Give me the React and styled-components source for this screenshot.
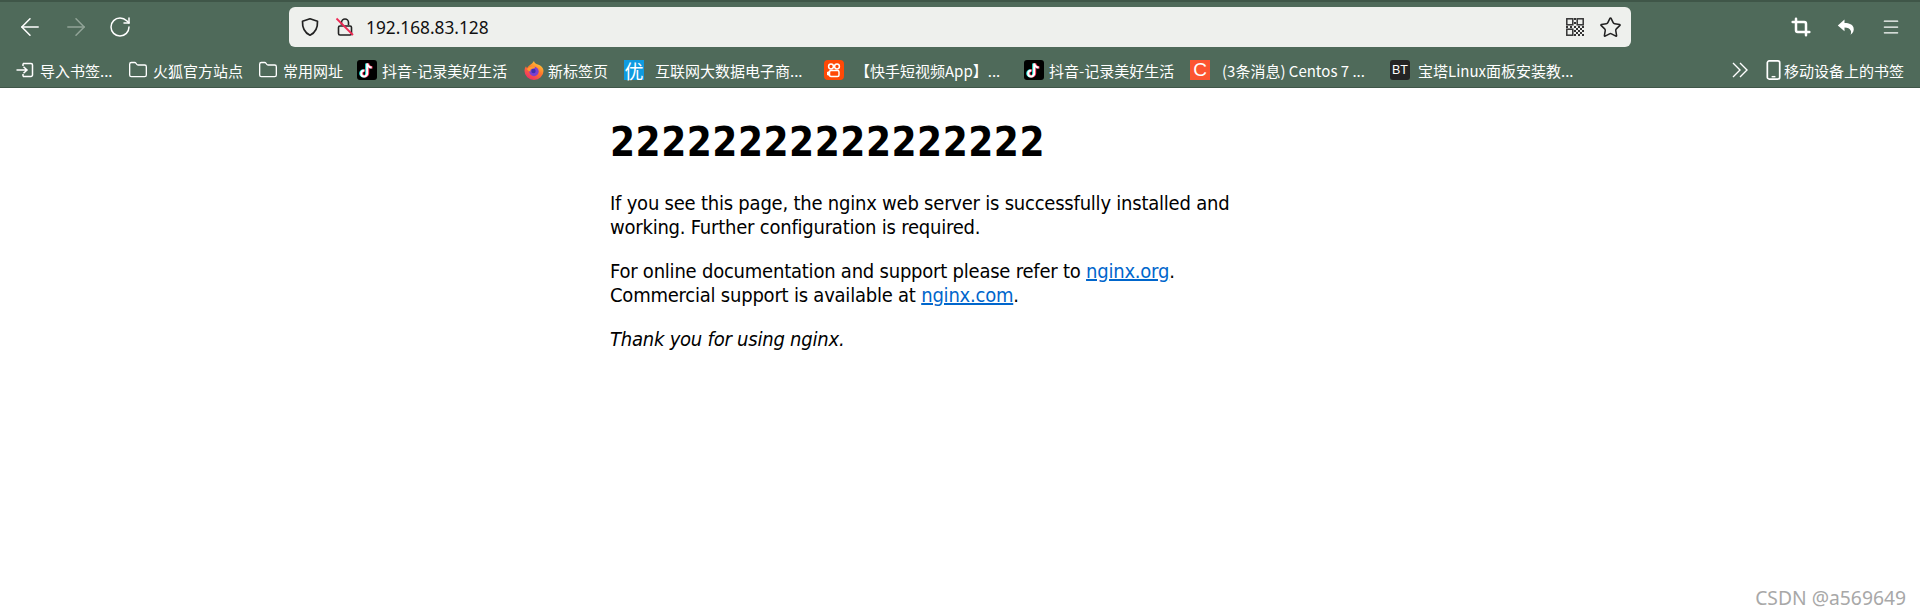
import styled, { createGlobalStyle } from 'styled-components';
import { ArrowLeft, ArrowRight, RotateCw, Star, Crop, Menu, Folder } from 'lucide-react';

const GlobalStyle = createGlobalStyle`
	html, body {
		margin: 0;
		padding: 0;
		background: #fff;
		height: 100%;
	}
	#root {
		height: 100%;
	}
`;

const Page = styled.div`
	position: relative;
	height: 615px;
	overflow: hidden;
	background: #fff;
`;

const Chrome = styled.header`
	background: #4f6a5a;
	border-top: 2px solid #3f5648;
	border-bottom: 1px solid #3f5648;
	height: 85px;
	font-family: "Noto Sans CJK SC", "Liberation Sans", sans-serif;
`;

const Toolbar = styled.div`
	display: flex;
	align-items: center;
	height: 40px;
	padding-top: 5px;
`;

const NavButtons = styled.div`
	display: flex;
	align-items: center;
	gap: 18px;
	width: 289px;
	padding-left: 16px;
	box-sizing: border-box;
`;

const AddressBar = styled.div`
	display: flex;
	align-items: center;
	width: 1342px;
	height: 40px;
	padding: 0 9px 0 11px;
	box-sizing: border-box;
	background: #eef0ed;
	border-radius: 6px;
	gap: 15px;
`;

const Url = styled.span`
	font-family: "Noto Sans", "Liberation Sans", sans-serif;
	font-size: 17.3px;
	color: #111;
	margin-left: -4px;
	flex: 1;
`;

const AddressActions = styled.div`
	display: flex;
	align-items: center;
	gap: 15px;
`;

const ToolSvg = styled.svg`
	width: ${(p) => p.$size}px;
	height: ${(p) => p.$size}px;
	flex: none;
	display: block;
`;

const TileSvg = styled.svg`
	width: 20px;
	height: 20px;
	flex: none;
	display: block;
`;

const ToolActions = styled.div`
	display: flex;
	align-items: center;
	gap: 26px;
	margin-left: 160px;
`;

const BookmarkBar = styled.div`
	display: flex;
	align-items: center;
	height: 32px;
	margin-top: 7px;
	padding: 0 15px 0 16px;
`;

const Bookmark = styled.div`
	display: flex;
	align-items: center;
	gap: ${(p) => p.$gap}px;
	width: ${(p) => p.$width}px;
	flex: none;
	font-size: 15px;
	color: #fff;
	white-space: nowrap;
`;

const LetterTile = styled.span`
	display: flex;
	align-items: center;
	justify-content: center;
	width: 20px;
	height: 20px;
	flex: none;
	background: ${(p) => p.$bg};
	border-radius: ${(p) => p.$radius}px;
	font-family: "Liberation Sans", "Noto Sans CJK SC", sans-serif;
	font-size: ${(p) => p.$size}px;
	color: #fff;
`;

const Overflow = styled.div`
	display: flex;
	margin-left: auto;
	margin-right: 16px;
`;

const Content = styled.main`
	width: 700px;
	margin: 0 auto;
	font-family: "DejaVu Sans", sans-serif;
	font-stretch: condensed;
	color: #000;
`;

const Heading = styled.h1`
	margin: 31px 0 26px;
	font-size: 40px;
	line-height: 46px;
	font-weight: 700;
	letter-spacing: 0.55px;
`;

const Para = styled.p`
	margin: 0 0 20px;
	font-size: 20px;
	line-height: 24px;
	letter-spacing: -0.22px;
`;

const Link = styled.a`
	color: #0066cc;
`;

const Watermark = styled.div`
	position: absolute;
	right: 14px;
	bottom: 4px;
	font-family: "Noto Sans", sans-serif;
	font-size: 19.3px;
	color: #a8a8a8;
`;

const TikTokIcon = () => (
	<TileSvg viewBox="0 0 20 20">
		<rect width="20" height="20" rx="3" fill="#000" />
		<path d="M10.2 3v10a3 3 0 1 1-3-3M10.2 3c.3 2.5 2 4 4.5 4.2" fill="none" stroke="#25f4ee" strokeWidth="2.4" transform="translate(-.8 .4)" />
		<path d="M10.2 3v10a3 3 0 1 1-3-3M10.2 3c.3 2.5 2 4 4.5 4.2" fill="none" stroke="#fe2c55" strokeWidth="2.4" transform="translate(.8 .4)" />
		<path d="M10.2 3v10a3 3 0 1 1-3-3M10.2 3c.3 2.5 2 4 4.5 4.2" fill="none" stroke="#fff" strokeWidth="2" transform="translate(0 .4)" />
	</TileSvg>
);

const FirefoxIcon = () => (
	<TileSvg viewBox="0 0 20 20">
		<defs>
			<linearGradient id="fx" x1="0.8" y1="0" x2="0.2" y2="1">
				<stop offset="0" stopColor="#ffd83a" />
				<stop offset="0.45" stopColor="#ff7a2a" />
				<stop offset="1" stopColor="#f0246e" />
			</linearGradient>
		</defs>
		<path d="M10 1c.2 1.8 1.6 2.5 3 3.3C15.5 4.7 19.5 7 19.5 11A9.5 9 0 0 1 .5 11c0-2 .6-3.6 1.5-4.8.2 1 .6 1.5 1.2 1.9C4 5.5 7.5 5 10 1z" fill="url(#fx)" />
		<circle cx="10" cy="11.5" r="4.7" fill="#7b3fd0" />
		<circle cx="9.5" cy="11" r="2.2" fill="#3d2fb0" />
		<path d="M3 9c2-2 5-3 7-2.5 2 .5 1 1.8-1 2-2 .3-3 1.5-2.5 3-1.5-.2-3-1-3.5-2.5z" fill="#ff9a2e" />
	</TileSvg>
);

const KuaishouIcon = () => (
	<TileSvg viewBox="0 0 20 20">
		<rect width="20" height="20" rx="4" fill="#ff4906" />
		<circle cx="7" cy="6.5" r="2.4" fill="none" stroke="#fff" strokeWidth="1.5" />
		<circle cx="13" cy="6.5" r="2.4" fill="none" stroke="#fff" strokeWidth="1.5" />
		<rect x="5.5" y="10.5" width="9.5" height="6" rx="1.5" fill="none" stroke="#fff" strokeWidth="1.5" />
		<path d="M3 12l2.5-1v5L3 15z" fill="#fff" />
	</TileSvg>
);

const ShieldIcon = () => (
	<ToolSvg viewBox="0 0 20 20" $size={20}>
		<path d="M10 1.8 17.5 4.2c.3 6.8-1.8 11.3-7.5 14-5.7-2.7-7.8-7.2-7.5-14z" fill="none" stroke="#222" strokeWidth="1.7" strokeLinejoin="round" />
	</ToolSvg>
);

const BrokenLockIcon = () => (
	<ToolSvg viewBox="0 0 20 20" $size={20}>
		<path d="M6.5 8V5.5a3.5 3.5 0 0 1 7 0V8" fill="none" stroke="#222" strokeWidth="1.6" />
		<rect x="3.5" y="9" width="13" height="9" rx="1.5" fill="none" stroke="#222" strokeWidth="1.6" />
		<path d="M1.5 1.5 18 18" stroke="#ee2a55" strokeWidth="1.8" />
	</ToolSvg>
);

const QrIcon = () => (
	<ToolSvg viewBox="0 0 18 18" $size={18}>
		<g fill="none" stroke="#333" strokeWidth="1.5">
			<rect x=".8" y=".8" width="6" height="6" />
			<rect x="11.2" y=".8" width="6" height="6" />
			<rect x=".8" y="11.2" width="6" height="6" />
		</g>
		<path d="M8 0h2v2H8zM8 4h2v2H8zM0 8h2v2H0zM4 8h2v2H4zM8 8h2v2H8zM12 8h2v2h-2zM16 8h2v2h-2zM8 12h2v2H8zM8 16h2v2H8zM12 12h2v2h-2zM16 12h2v2h-2zM12 16h2v2h-2zM16 16h2v2h-2zM10 10h2v2h-2zM14 10h2v2h-2zM10 14h2v2h-2zM14 14h2v2h-2z" fill="#333" />
	</ToolSvg>
);

const ReplyIcon = () => (
	<ToolSvg viewBox="0 0 18 18" $size={18}>
		<path d="M7.5 1.5 .8 7.5l6.7 5.8V9.500c3.300 0 5.200.8 6.300 3.300.4 1 .4 2.500-.3 4 2.800-2 3.800-4.500 3-7.300-.9-3-4-4.500-9-4.500z" fill="#fff" />
	</ToolSvg>
);

const ImportIcon = () => (
	<ToolSvg viewBox="0 0 18 18" $size={18}>
		<path d="M7 2.5h8a1.5 1.5 0 0 1 1.5 1.5v10a1.5 1.5 0 0 1-1.5 1.5H7M7 2.5V5M7 15.5V13" fill="none" stroke="#fff" strokeWidth="1.5" />
		<path d="M.5 9h10M7.5 5.8 11 9l-3.5 3.2" fill="none" stroke="#fff" strokeWidth="1.5" />
	</ToolSvg>
);

const OverflowIcon = () => (
	<ToolSvg viewBox="0 0 16 16" $size={16}>
		<path d="M1 1l7 7-7 7M8 1l7 7-7 7" fill="none" stroke="#fff" strokeWidth="1.4" />
	</ToolSvg>
);

const PhoneIcon = () => (
	<ToolSvg viewBox="0 0 17 21" $size={20}>
		<rect x="1.5" y="1" width="13" height="19" rx="2" fill="none" stroke="#fff" strokeWidth="1.8" />
		<path d="M6 17.5h4" stroke="#fff" strokeWidth="1.5" />
	</ToolSvg>
);

const FolderGlyph = () => <Folder size={20} color="#fff" strokeWidth={1.6} />;

const bookmarks = [
	{ icon: <ImportIcon />, text: '导入书签...', width: 112, gap: 6 },
	{ icon: <FolderGlyph />, text: '火狐官方站点', width: 130, gap: 5 },
	{ icon: <FolderGlyph />, text: '常用网址', width: 99, gap: 5 },
	{ icon: <TikTokIcon />, text: '抖音-记录美好生活', width: 167, gap: 5 },
	{ icon: <FirefoxIcon />, text: '新标签页', width: 100, gap: 4 },
	{ icon: <LetterTile $bg="#0f9be0" $radius={0} $size={19}>优</LetterTile>, text: '互联网大数据电子商...', width: 200, gap: 11 },
	{ icon: <KuaishouIcon />, text: '【快手短视频App】...', width: 200, gap: 11 },
	{ icon: <TikTokIcon />, text: '抖音-记录美好生活', width: 166, gap: 5 },
	{ icon: <LetterTile $bg="#fc5531" $radius={0} $size={19}>C</LetterTile>, text: '(3条消息) Centos 7 ...', width: 200, gap: 12 },
	{ icon: <LetterTile $bg="#242424" $radius={3} $size={12.5}>BT</LetterTile>, text: '宝塔Linux面板安装教...', width: 200, gap: 8 },
];

const App = () => {
	return (
		<Page>
			<GlobalStyle />
			<Chrome>
				<Toolbar>
					<NavButtons>
						<ArrowLeft size={28} color="#fff" strokeWidth={1.3} />
						<ArrowRight size={28} color="#92a498" strokeWidth={1.3} />
						<RotateCw size={24} color="#fff" strokeWidth={1.5} />
					</NavButtons>
					<AddressBar>
						<ShieldIcon />
						<BrokenLockIcon />
						<Url>192.168.83.128</Url>
						<AddressActions>
							<QrIcon />
							<Star size={23} color="#222" strokeWidth={1.6} />
						</AddressActions>
					</AddressBar>
					<ToolActions>
						<Crop size={20} color="#fff" strokeWidth={3} />
						<ReplyIcon />
						<Menu size={20} color="#fff" strokeWidth={1.5} />
					</ToolActions>
				</Toolbar>
				<BookmarkBar>
					{bookmarks.map((b, i) => (
						<Bookmark key={i} $width={b.width} $gap={b.gap}>
							{b.icon}
							<span>{b.text}</span>
						</Bookmark>
					))}
					<Overflow>
						<OverflowIcon />
					</Overflow>
					<Bookmark $width={141} $gap={0}>
						<PhoneIcon />
						<span>移动设备上的书签</span>
					</Bookmark>
				</BookmarkBar>
			</Chrome>
			<Content>
				<Heading>22222222222222222</Heading>
				<Para>
					If you see this page, the nginx web server is successfully installed and<br />
					working. Further configuration is required.
				</Para>
				<Para>
					For online documentation and support please refer to <Link href="#">nginx.org</Link>.<br />
					Commercial support is available at <Link href="#">nginx.com</Link>.
				</Para>
				<Para><em>Thank you for using nginx.</em></Para>
			</Content>
			<Watermark>CSDN @a569649</Watermark>
		</Page>
	);
};

export default App;
